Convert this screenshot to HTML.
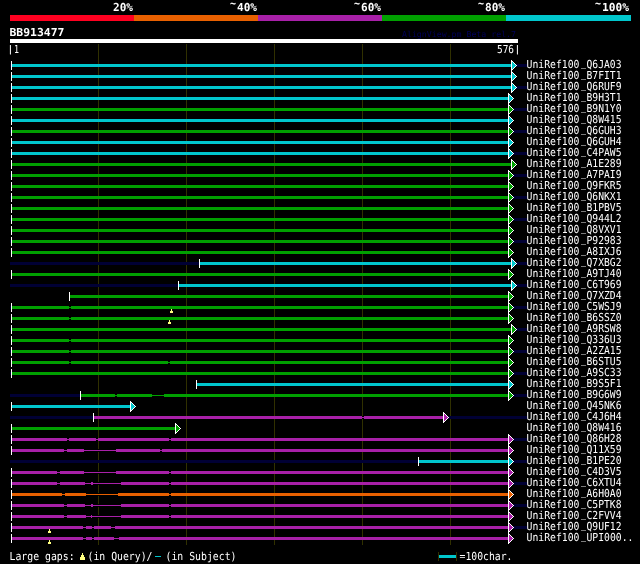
<!DOCTYPE html>
<html><head><meta charset="utf-8"><title>AlignView</title>
<style>
html,body{margin:0;padding:0;background:#000;overflow:hidden;}
svg{display:block;will-change:transform;}
text{font-family:"DejaVu Sans Mono", "Liberation Mono", monospace;white-space:pre;}
</style></head>
<body>
<svg width="640" height="564" viewBox="0 0 640 564" shape-rendering="crispEdges" text-rendering="geometricPrecision">
<rect x="0" y="0" width="640" height="564" fill="#000"/>
<rect x="10" y="15" width="124" height="6" fill="#ff0020"/>
<rect x="134" y="15" width="124" height="6" fill="#e86000"/>
<rect x="258" y="15" width="124" height="6" fill="#a820a8"/>
<rect x="382" y="15" width="124" height="6" fill="#00a000"/>
<rect x="506" y="15" width="125" height="6" fill="#00c6cc"/>
<text x="113" y="11" font-size="11.0" fill="#fff" textLength="20" lengthAdjust="spacingAndGlyphs" font-weight="bold">20%</text>
<text y="11" font-size="11.0" fill="#fff" font-weight="bold"><tspan x="230" dy="-4" textLength="6" lengthAdjust="spacingAndGlyphs">~</tspan><tspan x="237" dy="4" textLength="20" lengthAdjust="spacingAndGlyphs">40%</tspan></text>
<text y="11" font-size="11.0" fill="#fff" font-weight="bold"><tspan x="354" dy="-4" textLength="6" lengthAdjust="spacingAndGlyphs">~</tspan><tspan x="361" dy="4" textLength="20" lengthAdjust="spacingAndGlyphs">60%</tspan></text>
<text y="11" font-size="11.0" fill="#fff" font-weight="bold"><tspan x="478" dy="-4" textLength="6" lengthAdjust="spacingAndGlyphs">~</tspan><tspan x="485" dy="4" textLength="20" lengthAdjust="spacingAndGlyphs">80%</tspan></text>
<text y="11" font-size="11.0" fill="#fff" font-weight="bold"><tspan x="595" dy="-4" textLength="6" lengthAdjust="spacingAndGlyphs">~</tspan><tspan x="602" dy="4" textLength="27" lengthAdjust="spacingAndGlyphs">100%</tspan></text>
<text x="9.5" y="36" font-size="11.0" fill="#fff" textLength="55" lengthAdjust="spacingAndGlyphs" font-weight="bold">BB913477</text>
<text x="402" y="37" font-size="8.2" fill="#00005a" textLength="114" lengthAdjust="spacingAndGlyphs">AlignView.pm Beta rel.7</text>
<rect x="10" y="39" width="508" height="4" fill="#fff"/>
<text y="53" font-size="11.0" fill="#fff"><tspan x="7.79" y="51.9" font-size="9" stroke="#fff" stroke-width="0.3">|</tspan><tspan x="14" y="53" textLength="5" lengthAdjust="spacingAndGlyphs">1</tspan></text>
<text y="53" font-size="11.0" fill="#fff"><tspan x="497" textLength="17" lengthAdjust="spacingAndGlyphs">576</tspan><tspan x="514.79" y="51.9" font-size="9" stroke="#fff" stroke-width="0.3">|</tspan></text>
<rect x="98" y="44" width="1" height="501" fill="#303000"/>
<rect x="186" y="44" width="1" height="501" fill="#303000"/>
<rect x="274" y="44" width="1" height="501" fill="#303000"/>
<rect x="362" y="44" width="1" height="501" fill="#303000"/>
<rect x="450" y="44" width="1" height="501" fill="#303000"/>
<rect x="10" y="64" width="517" height="3" fill="#000034"/>
<rect x="12" y="64" width="499" height="3" fill="#00c6cc"/>
<rect x="11" y="61" width="1" height="9" fill="#fff"/>
<polygon points="511.5,60.5 511.5,70.5 516.5,65.5" fill="#00c6cc" stroke="#fff" stroke-width="1"/>
<text y="68" font-size="11.0" fill="#fff"><tspan x="526.5" textLength="53" lengthAdjust="spacingAndGlyphs">UniRef100</tspan><tspan x="581" dy="-2.5" textLength="5" lengthAdjust="spacingAndGlyphs">_</tspan><tspan x="586.5" dy="2.5" textLength="35" lengthAdjust="spacingAndGlyphs">Q6JA03</tspan></text>
<rect x="12" y="75" width="499" height="3" fill="#00c6cc"/>
<rect x="11" y="72" width="1" height="9" fill="#fff"/>
<polygon points="511.5,71.5 511.5,81.5 516.5,76.5" fill="#00c6cc" stroke="#fff" stroke-width="1"/>
<text y="79" font-size="11.0" fill="#fff"><tspan x="526.5" textLength="53" lengthAdjust="spacingAndGlyphs">UniRef100</tspan><tspan x="581" dy="-2.5" textLength="5" lengthAdjust="spacingAndGlyphs">_</tspan><tspan x="586.5" dy="2.5" textLength="35" lengthAdjust="spacingAndGlyphs">B7FIT1</tspan></text>
<rect x="10" y="86" width="517" height="3" fill="#000034"/>
<rect x="12" y="86" width="499" height="3" fill="#00c6cc"/>
<rect x="11" y="83" width="1" height="9" fill="#fff"/>
<polygon points="511.5,82.5 511.5,92.5 516.5,87.5" fill="#00c6cc" stroke="#fff" stroke-width="1"/>
<text y="90" font-size="11.0" fill="#fff"><tspan x="526.5" textLength="53" lengthAdjust="spacingAndGlyphs">UniRef100</tspan><tspan x="581" dy="-2.5" textLength="5" lengthAdjust="spacingAndGlyphs">_</tspan><tspan x="586.5" dy="2.5" textLength="35" lengthAdjust="spacingAndGlyphs">Q6RUF9</tspan></text>
<rect x="12" y="97" width="496" height="3" fill="#00c6cc"/>
<rect x="11" y="94" width="1" height="9" fill="#fff"/>
<polygon points="508.5,93.5 508.5,103.5 513.5,98.5" fill="#00c6cc" stroke="#fff" stroke-width="1"/>
<text y="101" font-size="11.0" fill="#fff"><tspan x="526.5" textLength="53" lengthAdjust="spacingAndGlyphs">UniRef100</tspan><tspan x="581" dy="-2.5" textLength="5" lengthAdjust="spacingAndGlyphs">_</tspan><tspan x="586.5" dy="2.5" textLength="35" lengthAdjust="spacingAndGlyphs">B9H3T1</tspan></text>
<rect x="10" y="108" width="517" height="3" fill="#000034"/>
<rect x="12" y="108" width="496" height="3" fill="#00a000"/>
<rect x="11" y="105" width="1" height="9" fill="#fff"/>
<polygon points="508.5,104.5 508.5,114.5 513.5,109.5" fill="#00a000" stroke="#fff" stroke-width="1"/>
<text y="112" font-size="11.0" fill="#fff"><tspan x="526.5" textLength="53" lengthAdjust="spacingAndGlyphs">UniRef100</tspan><tspan x="581" dy="-2.5" textLength="5" lengthAdjust="spacingAndGlyphs">_</tspan><tspan x="586.5" dy="2.5" textLength="35" lengthAdjust="spacingAndGlyphs">B9N1Y0</tspan></text>
<rect x="12" y="119" width="496" height="3" fill="#00c6cc"/>
<rect x="11" y="116" width="1" height="9" fill="#fff"/>
<polygon points="508.5,115.5 508.5,125.5 513.5,120.5" fill="#00c6cc" stroke="#fff" stroke-width="1"/>
<text y="123" font-size="11.0" fill="#fff"><tspan x="526.5" textLength="53" lengthAdjust="spacingAndGlyphs">UniRef100</tspan><tspan x="581" dy="-2.5" textLength="5" lengthAdjust="spacingAndGlyphs">_</tspan><tspan x="586.5" dy="2.5" textLength="35" lengthAdjust="spacingAndGlyphs">Q8W415</tspan></text>
<rect x="10" y="130" width="517" height="3" fill="#000034"/>
<rect x="12" y="130" width="496" height="3" fill="#00a000"/>
<rect x="11" y="127" width="1" height="9" fill="#fff"/>
<polygon points="508.5,126.5 508.5,136.5 513.5,131.5" fill="#00a000" stroke="#fff" stroke-width="1"/>
<text y="134" font-size="11.0" fill="#fff"><tspan x="526.5" textLength="53" lengthAdjust="spacingAndGlyphs">UniRef100</tspan><tspan x="581" dy="-2.5" textLength="5" lengthAdjust="spacingAndGlyphs">_</tspan><tspan x="586.5" dy="2.5" textLength="35" lengthAdjust="spacingAndGlyphs">Q6GUH3</tspan></text>
<rect x="12" y="141" width="496" height="3" fill="#00c6cc"/>
<rect x="11" y="138" width="1" height="9" fill="#fff"/>
<polygon points="508.5,137.5 508.5,147.5 513.5,142.5" fill="#00c6cc" stroke="#fff" stroke-width="1"/>
<text y="145" font-size="11.0" fill="#fff"><tspan x="526.5" textLength="53" lengthAdjust="spacingAndGlyphs">UniRef100</tspan><tspan x="581" dy="-2.5" textLength="5" lengthAdjust="spacingAndGlyphs">_</tspan><tspan x="586.5" dy="2.5" textLength="35" lengthAdjust="spacingAndGlyphs">Q6GUH4</tspan></text>
<rect x="10" y="152" width="517" height="3" fill="#000034"/>
<rect x="12" y="152" width="496" height="3" fill="#00c6cc"/>
<rect x="11" y="149" width="1" height="9" fill="#fff"/>
<polygon points="508.5,148.5 508.5,158.5 513.5,153.5" fill="#00c6cc" stroke="#fff" stroke-width="1"/>
<text y="156" font-size="11.0" fill="#fff"><tspan x="526.5" textLength="53" lengthAdjust="spacingAndGlyphs">UniRef100</tspan><tspan x="581" dy="-2.5" textLength="5" lengthAdjust="spacingAndGlyphs">_</tspan><tspan x="586.5" dy="2.5" textLength="35" lengthAdjust="spacingAndGlyphs">C4PAW5</tspan></text>
<rect x="12" y="163" width="499" height="3" fill="#00a000"/>
<rect x="11" y="160" width="1" height="9" fill="#fff"/>
<polygon points="511.5,159.5 511.5,169.5 516.5,164.5" fill="#00a000" stroke="#fff" stroke-width="1"/>
<text y="167" font-size="11.0" fill="#fff"><tspan x="526.5" textLength="53" lengthAdjust="spacingAndGlyphs">UniRef100</tspan><tspan x="581" dy="-2.5" textLength="5" lengthAdjust="spacingAndGlyphs">_</tspan><tspan x="586.5" dy="2.5" textLength="35" lengthAdjust="spacingAndGlyphs">A1E289</tspan></text>
<rect x="10" y="174" width="517" height="3" fill="#000034"/>
<rect x="12" y="174" width="496" height="3" fill="#00a000"/>
<rect x="11" y="171" width="1" height="9" fill="#fff"/>
<polygon points="508.5,170.5 508.5,180.5 513.5,175.5" fill="#00a000" stroke="#fff" stroke-width="1"/>
<text y="178" font-size="11.0" fill="#fff"><tspan x="526.5" textLength="53" lengthAdjust="spacingAndGlyphs">UniRef100</tspan><tspan x="581" dy="-2.5" textLength="5" lengthAdjust="spacingAndGlyphs">_</tspan><tspan x="586.5" dy="2.5" textLength="35" lengthAdjust="spacingAndGlyphs">A7PAI9</tspan></text>
<rect x="12" y="185" width="496" height="3" fill="#00a000"/>
<rect x="11" y="182" width="1" height="9" fill="#fff"/>
<polygon points="508.5,181.5 508.5,191.5 513.5,186.5" fill="#00a000" stroke="#fff" stroke-width="1"/>
<text y="189" font-size="11.0" fill="#fff"><tspan x="526.5" textLength="53" lengthAdjust="spacingAndGlyphs">UniRef100</tspan><tspan x="581" dy="-2.5" textLength="5" lengthAdjust="spacingAndGlyphs">_</tspan><tspan x="586.5" dy="2.5" textLength="35" lengthAdjust="spacingAndGlyphs">Q9FKR5</tspan></text>
<rect x="10" y="196" width="517" height="3" fill="#000034"/>
<rect x="12" y="196" width="496" height="3" fill="#00a000"/>
<rect x="11" y="193" width="1" height="9" fill="#fff"/>
<polygon points="508.5,192.5 508.5,202.5 513.5,197.5" fill="#00a000" stroke="#fff" stroke-width="1"/>
<text y="200" font-size="11.0" fill="#fff"><tspan x="526.5" textLength="53" lengthAdjust="spacingAndGlyphs">UniRef100</tspan><tspan x="581" dy="-2.5" textLength="5" lengthAdjust="spacingAndGlyphs">_</tspan><tspan x="586.5" dy="2.5" textLength="35" lengthAdjust="spacingAndGlyphs">Q6NKX1</tspan></text>
<rect x="12" y="207" width="496" height="3" fill="#00a000"/>
<rect x="11" y="204" width="1" height="9" fill="#fff"/>
<polygon points="508.5,203.5 508.5,213.5 513.5,208.5" fill="#00a000" stroke="#fff" stroke-width="1"/>
<text y="211" font-size="11.0" fill="#fff"><tspan x="526.5" textLength="53" lengthAdjust="spacingAndGlyphs">UniRef100</tspan><tspan x="581" dy="-2.5" textLength="5" lengthAdjust="spacingAndGlyphs">_</tspan><tspan x="586.5" dy="2.5" textLength="35" lengthAdjust="spacingAndGlyphs">B1PBV5</tspan></text>
<rect x="10" y="218" width="517" height="3" fill="#000034"/>
<rect x="12" y="218" width="496" height="3" fill="#00a000"/>
<rect x="11" y="215" width="1" height="9" fill="#fff"/>
<polygon points="508.5,214.5 508.5,224.5 513.5,219.5" fill="#00a000" stroke="#fff" stroke-width="1"/>
<text y="222" font-size="11.0" fill="#fff"><tspan x="526.5" textLength="53" lengthAdjust="spacingAndGlyphs">UniRef100</tspan><tspan x="581" dy="-2.5" textLength="5" lengthAdjust="spacingAndGlyphs">_</tspan><tspan x="586.5" dy="2.5" textLength="35" lengthAdjust="spacingAndGlyphs">Q944L2</tspan></text>
<rect x="12" y="229" width="496" height="3" fill="#00a000"/>
<rect x="11" y="226" width="1" height="9" fill="#fff"/>
<polygon points="508.5,225.5 508.5,235.5 513.5,230.5" fill="#00a000" stroke="#fff" stroke-width="1"/>
<text y="233" font-size="11.0" fill="#fff"><tspan x="526.5" textLength="53" lengthAdjust="spacingAndGlyphs">UniRef100</tspan><tspan x="581" dy="-2.5" textLength="5" lengthAdjust="spacingAndGlyphs">_</tspan><tspan x="586.5" dy="2.5" textLength="35" lengthAdjust="spacingAndGlyphs">Q8VXV1</tspan></text>
<rect x="10" y="240" width="517" height="3" fill="#000034"/>
<rect x="12" y="240" width="496" height="3" fill="#00a000"/>
<rect x="11" y="237" width="1" height="9" fill="#fff"/>
<polygon points="508.5,236.5 508.5,246.5 513.5,241.5" fill="#00a000" stroke="#fff" stroke-width="1"/>
<text y="244" font-size="11.0" fill="#fff"><tspan x="526.5" textLength="53" lengthAdjust="spacingAndGlyphs">UniRef100</tspan><tspan x="581" dy="-2.5" textLength="5" lengthAdjust="spacingAndGlyphs">_</tspan><tspan x="586.5" dy="2.5" textLength="35" lengthAdjust="spacingAndGlyphs">P92983</tspan></text>
<rect x="12" y="251" width="496" height="3" fill="#00a000"/>
<rect x="11" y="248" width="1" height="9" fill="#fff"/>
<polygon points="508.5,247.5 508.5,257.5 513.5,252.5" fill="#00a000" stroke="#fff" stroke-width="1"/>
<text y="255" font-size="11.0" fill="#fff"><tspan x="526.5" textLength="53" lengthAdjust="spacingAndGlyphs">UniRef100</tspan><tspan x="581" dy="-2.5" textLength="5" lengthAdjust="spacingAndGlyphs">_</tspan><tspan x="586.5" dy="2.5" textLength="35" lengthAdjust="spacingAndGlyphs">A8IXJ6</tspan></text>
<rect x="10" y="262" width="517" height="3" fill="#000034"/>
<rect x="200" y="262" width="311" height="3" fill="#00c6cc"/>
<rect x="199" y="259" width="1" height="9" fill="#fff"/>
<polygon points="511.5,258.5 511.5,268.5 516.5,263.5" fill="#00c6cc" stroke="#fff" stroke-width="1"/>
<text y="266" font-size="11.0" fill="#fff"><tspan x="526.5" textLength="53" lengthAdjust="spacingAndGlyphs">UniRef100</tspan><tspan x="581" dy="-2.5" textLength="5" lengthAdjust="spacingAndGlyphs">_</tspan><tspan x="586.5" dy="2.5" textLength="35" lengthAdjust="spacingAndGlyphs">Q7XBG2</tspan></text>
<rect x="12" y="273" width="496" height="3" fill="#00a000"/>
<rect x="11" y="270" width="1" height="9" fill="#fff"/>
<polygon points="508.5,269.5 508.5,279.5 513.5,274.5" fill="#00a000" stroke="#fff" stroke-width="1"/>
<text y="277" font-size="11.0" fill="#fff"><tspan x="526.5" textLength="53" lengthAdjust="spacingAndGlyphs">UniRef100</tspan><tspan x="581" dy="-2.5" textLength="5" lengthAdjust="spacingAndGlyphs">_</tspan><tspan x="586.5" dy="2.5" textLength="35" lengthAdjust="spacingAndGlyphs">A9TJ40</tspan></text>
<rect x="10" y="284" width="517" height="3" fill="#000034"/>
<rect x="179" y="284" width="332" height="3" fill="#00c6cc"/>
<rect x="178" y="281" width="1" height="9" fill="#fff"/>
<polygon points="511.5,280.5 511.5,290.5 516.5,285.5" fill="#00c6cc" stroke="#fff" stroke-width="1"/>
<text y="288" font-size="11.0" fill="#fff"><tspan x="526.5" textLength="53" lengthAdjust="spacingAndGlyphs">UniRef100</tspan><tspan x="581" dy="-2.5" textLength="5" lengthAdjust="spacingAndGlyphs">_</tspan><tspan x="586.5" dy="2.5" textLength="35" lengthAdjust="spacingAndGlyphs">C6T969</tspan></text>
<rect x="70" y="295" width="438" height="3" fill="#00a000"/>
<rect x="69" y="292" width="1" height="9" fill="#fff"/>
<polygon points="508.5,291.5 508.5,301.5 513.5,296.5" fill="#00a000" stroke="#fff" stroke-width="1"/>
<text y="299" font-size="11.0" fill="#fff"><tspan x="526.5" textLength="53" lengthAdjust="spacingAndGlyphs">UniRef100</tspan><tspan x="581" dy="-2.5" textLength="5" lengthAdjust="spacingAndGlyphs">_</tspan><tspan x="586.5" dy="2.5" textLength="35" lengthAdjust="spacingAndGlyphs">Q7XZD4</tspan></text>
<rect x="10" y="306" width="517" height="3" fill="#000034"/>
<rect x="69" y="306" width="2" height="3" fill="#000"/>
<rect x="69" y="307" width="2" height="1" fill="#00a000"/>
<rect x="12" y="306" width="57" height="3" fill="#00a000"/>
<rect x="71" y="306" width="437" height="3" fill="#00a000"/>
<rect x="11" y="303" width="1" height="9" fill="#fff"/>
<polygon points="508.5,302.5 508.5,312.5 513.5,307.5" fill="#00a000" stroke="#fff" stroke-width="1"/>
<rect x="171" y="309" width="1" height="2" fill="#ffff80"/>
<rect x="170" y="311" width="3" height="2" fill="#ffff80"/>
<text y="310" font-size="11.0" fill="#fff"><tspan x="526.5" textLength="53" lengthAdjust="spacingAndGlyphs">UniRef100</tspan><tspan x="581" dy="-2.5" textLength="5" lengthAdjust="spacingAndGlyphs">_</tspan><tspan x="586.5" dy="2.5" textLength="35" lengthAdjust="spacingAndGlyphs">C5WSJ9</tspan></text>
<rect x="69" y="317" width="2" height="3" fill="#000"/>
<rect x="69" y="318" width="2" height="1" fill="#00a000"/>
<rect x="12" y="317" width="57" height="3" fill="#00a000"/>
<rect x="71" y="317" width="437" height="3" fill="#00a000"/>
<rect x="11" y="314" width="1" height="9" fill="#fff"/>
<polygon points="508.5,313.5 508.5,323.5 513.5,318.5" fill="#00a000" stroke="#fff" stroke-width="1"/>
<rect x="169" y="320" width="1" height="2" fill="#ffff80"/>
<rect x="168" y="322" width="3" height="2" fill="#ffff80"/>
<text y="321" font-size="11.0" fill="#fff"><tspan x="526.5" textLength="53" lengthAdjust="spacingAndGlyphs">UniRef100</tspan><tspan x="581" dy="-2.5" textLength="5" lengthAdjust="spacingAndGlyphs">_</tspan><tspan x="586.5" dy="2.5" textLength="35" lengthAdjust="spacingAndGlyphs">B6SSZ0</tspan></text>
<rect x="10" y="328" width="517" height="3" fill="#000034"/>
<rect x="12" y="328" width="499" height="3" fill="#00a000"/>
<rect x="11" y="325" width="1" height="9" fill="#fff"/>
<polygon points="511.5,324.5 511.5,334.5 516.5,329.5" fill="#00a000" stroke="#fff" stroke-width="1"/>
<text y="332" font-size="11.0" fill="#fff"><tspan x="526.5" textLength="53" lengthAdjust="spacingAndGlyphs">UniRef100</tspan><tspan x="581" dy="-2.5" textLength="5" lengthAdjust="spacingAndGlyphs">_</tspan><tspan x="586.5" dy="2.5" textLength="35" lengthAdjust="spacingAndGlyphs">A9RSW8</tspan></text>
<rect x="69" y="339" width="2" height="3" fill="#000"/>
<rect x="69" y="340" width="2" height="1" fill="#00a000"/>
<rect x="12" y="339" width="57" height="3" fill="#00a000"/>
<rect x="71" y="339" width="437" height="3" fill="#00a000"/>
<rect x="11" y="336" width="1" height="9" fill="#fff"/>
<polygon points="508.5,335.5 508.5,345.5 513.5,340.5" fill="#00a000" stroke="#fff" stroke-width="1"/>
<text y="343" font-size="11.0" fill="#fff"><tspan x="526.5" textLength="53" lengthAdjust="spacingAndGlyphs">UniRef100</tspan><tspan x="581" dy="-2.5" textLength="5" lengthAdjust="spacingAndGlyphs">_</tspan><tspan x="586.5" dy="2.5" textLength="35" lengthAdjust="spacingAndGlyphs">Q336U3</tspan></text>
<rect x="10" y="350" width="517" height="3" fill="#000034"/>
<rect x="69" y="350" width="2" height="3" fill="#000"/>
<rect x="69" y="351" width="2" height="1" fill="#00a000"/>
<rect x="12" y="350" width="57" height="3" fill="#00a000"/>
<rect x="71" y="350" width="437" height="3" fill="#00a000"/>
<rect x="11" y="347" width="1" height="9" fill="#fff"/>
<polygon points="508.5,346.5 508.5,356.5 513.5,351.5" fill="#00a000" stroke="#fff" stroke-width="1"/>
<text y="354" font-size="11.0" fill="#fff"><tspan x="526.5" textLength="53" lengthAdjust="spacingAndGlyphs">UniRef100</tspan><tspan x="581" dy="-2.5" textLength="5" lengthAdjust="spacingAndGlyphs">_</tspan><tspan x="586.5" dy="2.5" textLength="35" lengthAdjust="spacingAndGlyphs">A2ZA15</tspan></text>
<rect x="69" y="361" width="2" height="3" fill="#000"/>
<rect x="69" y="362" width="2" height="1" fill="#00a000"/>
<rect x="168" y="361" width="2" height="3" fill="#000"/>
<rect x="168" y="362" width="2" height="1" fill="#00a000"/>
<rect x="12" y="361" width="57" height="3" fill="#00a000"/>
<rect x="71" y="361" width="97" height="3" fill="#00a000"/>
<rect x="170" y="361" width="338" height="3" fill="#00a000"/>
<rect x="11" y="358" width="1" height="9" fill="#fff"/>
<polygon points="508.5,357.5 508.5,367.5 513.5,362.5" fill="#00a000" stroke="#fff" stroke-width="1"/>
<text y="365" font-size="11.0" fill="#fff"><tspan x="526.5" textLength="53" lengthAdjust="spacingAndGlyphs">UniRef100</tspan><tspan x="581" dy="-2.5" textLength="5" lengthAdjust="spacingAndGlyphs">_</tspan><tspan x="586.5" dy="2.5" textLength="35" lengthAdjust="spacingAndGlyphs">B6STU5</tspan></text>
<rect x="10" y="372" width="517" height="3" fill="#000034"/>
<rect x="12" y="372" width="496" height="3" fill="#00a000"/>
<rect x="11" y="369" width="1" height="9" fill="#fff"/>
<polygon points="508.5,368.5 508.5,378.5 513.5,373.5" fill="#00a000" stroke="#fff" stroke-width="1"/>
<text y="376" font-size="11.0" fill="#fff"><tspan x="526.5" textLength="53" lengthAdjust="spacingAndGlyphs">UniRef100</tspan><tspan x="581" dy="-2.5" textLength="5" lengthAdjust="spacingAndGlyphs">_</tspan><tspan x="586.5" dy="2.5" textLength="35" lengthAdjust="spacingAndGlyphs">A9SC33</tspan></text>
<rect x="197" y="383" width="311" height="3" fill="#00c6cc"/>
<rect x="196" y="380" width="1" height="9" fill="#fff"/>
<polygon points="508.5,379.5 508.5,389.5 513.5,384.5" fill="#00c6cc" stroke="#fff" stroke-width="1"/>
<text y="387" font-size="11.0" fill="#fff"><tspan x="526.5" textLength="53" lengthAdjust="spacingAndGlyphs">UniRef100</tspan><tspan x="581" dy="-2.5" textLength="5" lengthAdjust="spacingAndGlyphs">_</tspan><tspan x="586.5" dy="2.5" textLength="35" lengthAdjust="spacingAndGlyphs">B9S5F1</tspan></text>
<rect x="10" y="394" width="517" height="3" fill="#000034"/>
<rect x="115" y="394" width="2" height="3" fill="#000"/>
<rect x="115" y="395" width="2" height="1" fill="#00a000"/>
<rect x="152" y="394" width="12" height="3" fill="#000"/>
<rect x="152" y="395" width="12" height="1" fill="#00a000"/>
<rect x="81" y="394" width="34" height="3" fill="#00a000"/>
<rect x="117" y="394" width="35" height="3" fill="#00a000"/>
<rect x="164" y="394" width="344" height="3" fill="#00a000"/>
<rect x="80" y="391" width="1" height="9" fill="#fff"/>
<polygon points="508.5,390.5 508.5,400.5 513.5,395.5" fill="#00a000" stroke="#fff" stroke-width="1"/>
<text y="398" font-size="11.0" fill="#fff"><tspan x="526.5" textLength="53" lengthAdjust="spacingAndGlyphs">UniRef100</tspan><tspan x="581" dy="-2.5" textLength="5" lengthAdjust="spacingAndGlyphs">_</tspan><tspan x="586.5" dy="2.5" textLength="35" lengthAdjust="spacingAndGlyphs">B9G6W9</tspan></text>
<rect x="12" y="405" width="118" height="3" fill="#00c6cc"/>
<rect x="11" y="402" width="1" height="9" fill="#fff"/>
<polygon points="130.5,401.5 130.5,411.5 135.5,406.5" fill="#00c6cc" stroke="#fff" stroke-width="1"/>
<text y="409" font-size="11.0" fill="#fff"><tspan x="526.5" textLength="53" lengthAdjust="spacingAndGlyphs">UniRef100</tspan><tspan x="581" dy="-2.5" textLength="5" lengthAdjust="spacingAndGlyphs">_</tspan><tspan x="586.5" dy="2.5" textLength="35" lengthAdjust="spacingAndGlyphs">Q45NK6</tspan></text>
<rect x="10" y="416" width="517" height="3" fill="#000034"/>
<rect x="362" y="416" width="2" height="3" fill="#000"/>
<rect x="362" y="417" width="2" height="1" fill="#a820a8"/>
<rect x="94" y="416" width="268" height="3" fill="#a820a8"/>
<rect x="364" y="416" width="79" height="3" fill="#a820a8"/>
<rect x="93" y="413" width="1" height="9" fill="#fff"/>
<polygon points="443.5,412.5 443.5,422.5 448.5,417.5" fill="#a820a8" stroke="#fff" stroke-width="1"/>
<text y="420" font-size="11.0" fill="#fff"><tspan x="526.5" textLength="53" lengthAdjust="spacingAndGlyphs">UniRef100</tspan><tspan x="581" dy="-2.5" textLength="5" lengthAdjust="spacingAndGlyphs">_</tspan><tspan x="586.5" dy="2.5" textLength="35" lengthAdjust="spacingAndGlyphs">C4J6H4</tspan></text>
<rect x="12" y="427" width="163" height="3" fill="#00a000"/>
<rect x="11" y="424" width="1" height="9" fill="#fff"/>
<polygon points="175.5,423.5 175.5,433.5 180.5,428.5" fill="#00a000" stroke="#fff" stroke-width="1"/>
<text y="431" font-size="11.0" fill="#fff"><tspan x="526.5" textLength="53" lengthAdjust="spacingAndGlyphs">UniRef100</tspan><tspan x="581" dy="-2.5" textLength="5" lengthAdjust="spacingAndGlyphs">_</tspan><tspan x="586.5" dy="2.5" textLength="35" lengthAdjust="spacingAndGlyphs">Q8W416</tspan></text>
<rect x="10" y="438" width="517" height="3" fill="#000034"/>
<rect x="67" y="438" width="2" height="3" fill="#000"/>
<rect x="67" y="439" width="2" height="1" fill="#a820a8"/>
<rect x="96" y="438" width="2" height="3" fill="#000"/>
<rect x="96" y="439" width="2" height="1" fill="#a820a8"/>
<rect x="169" y="438" width="2" height="3" fill="#000"/>
<rect x="169" y="439" width="2" height="1" fill="#a820a8"/>
<rect x="12" y="438" width="55" height="3" fill="#a820a8"/>
<rect x="69" y="438" width="27" height="3" fill="#a820a8"/>
<rect x="98" y="438" width="71" height="3" fill="#a820a8"/>
<rect x="171" y="438" width="337" height="3" fill="#a820a8"/>
<rect x="11" y="435" width="1" height="9" fill="#fff"/>
<polygon points="508.5,434.5 508.5,444.5 513.5,439.5" fill="#a820a8" stroke="#fff" stroke-width="1"/>
<text y="442" font-size="11.0" fill="#fff"><tspan x="526.5" textLength="53" lengthAdjust="spacingAndGlyphs">UniRef100</tspan><tspan x="581" dy="-2.5" textLength="5" lengthAdjust="spacingAndGlyphs">_</tspan><tspan x="586.5" dy="2.5" textLength="35" lengthAdjust="spacingAndGlyphs">Q86H28</tspan></text>
<rect x="64" y="449" width="3" height="3" fill="#000"/>
<rect x="64" y="450" width="3" height="1" fill="#a820a8"/>
<rect x="84" y="449" width="32" height="3" fill="#000"/>
<rect x="84" y="450" width="32" height="1" fill="#a820a8"/>
<rect x="160" y="449" width="2" height="3" fill="#000"/>
<rect x="160" y="450" width="2" height="1" fill="#a820a8"/>
<rect x="12" y="449" width="52" height="3" fill="#a820a8"/>
<rect x="67" y="449" width="17" height="3" fill="#a820a8"/>
<rect x="116" y="449" width="44" height="3" fill="#a820a8"/>
<rect x="162" y="449" width="346" height="3" fill="#a820a8"/>
<rect x="11" y="446" width="1" height="9" fill="#fff"/>
<polygon points="508.5,445.5 508.5,455.5 513.5,450.5" fill="#a820a8" stroke="#fff" stroke-width="1"/>
<text y="453" font-size="11.0" fill="#fff"><tspan x="526.5" textLength="53" lengthAdjust="spacingAndGlyphs">UniRef100</tspan><tspan x="581" dy="-2.5" textLength="5" lengthAdjust="spacingAndGlyphs">_</tspan><tspan x="586.5" dy="2.5" textLength="35" lengthAdjust="spacingAndGlyphs">Q11X59</tspan></text>
<rect x="10" y="460" width="517" height="3" fill="#000034"/>
<rect x="419" y="460" width="89" height="3" fill="#00c6cc"/>
<rect x="418" y="457" width="1" height="9" fill="#fff"/>
<polygon points="508.5,456.5 508.5,466.5 513.5,461.5" fill="#00c6cc" stroke="#fff" stroke-width="1"/>
<text y="464" font-size="11.0" fill="#fff"><tspan x="526.5" textLength="53" lengthAdjust="spacingAndGlyphs">UniRef100</tspan><tspan x="581" dy="-2.5" textLength="5" lengthAdjust="spacingAndGlyphs">_</tspan><tspan x="586.5" dy="2.5" textLength="35" lengthAdjust="spacingAndGlyphs">B1PE20</tspan></text>
<rect x="57" y="471" width="3" height="3" fill="#000"/>
<rect x="57" y="472" width="3" height="1" fill="#a820a8"/>
<rect x="84" y="471" width="32" height="3" fill="#000"/>
<rect x="84" y="472" width="32" height="1" fill="#a820a8"/>
<rect x="169" y="471" width="2" height="3" fill="#000"/>
<rect x="169" y="472" width="2" height="1" fill="#a820a8"/>
<rect x="12" y="471" width="45" height="3" fill="#a820a8"/>
<rect x="60" y="471" width="24" height="3" fill="#a820a8"/>
<rect x="116" y="471" width="53" height="3" fill="#a820a8"/>
<rect x="171" y="471" width="337" height="3" fill="#a820a8"/>
<rect x="11" y="468" width="1" height="9" fill="#fff"/>
<polygon points="508.5,467.5 508.5,477.5 513.5,472.5" fill="#a820a8" stroke="#fff" stroke-width="1"/>
<text y="475" font-size="11.0" fill="#fff"><tspan x="526.5" textLength="53" lengthAdjust="spacingAndGlyphs">UniRef100</tspan><tspan x="581" dy="-2.5" textLength="5" lengthAdjust="spacingAndGlyphs">_</tspan><tspan x="586.5" dy="2.5" textLength="35" lengthAdjust="spacingAndGlyphs">C4D3V5</tspan></text>
<rect x="10" y="482" width="517" height="3" fill="#000034"/>
<rect x="57" y="482" width="3" height="3" fill="#000"/>
<rect x="57" y="483" width="3" height="1" fill="#a820a8"/>
<rect x="85" y="482" width="6" height="3" fill="#000"/>
<rect x="85" y="483" width="6" height="1" fill="#a820a8"/>
<rect x="93" y="482" width="28" height="3" fill="#000"/>
<rect x="93" y="483" width="28" height="1" fill="#a820a8"/>
<rect x="169" y="482" width="2" height="3" fill="#000"/>
<rect x="169" y="483" width="2" height="1" fill="#a820a8"/>
<rect x="12" y="482" width="45" height="3" fill="#a820a8"/>
<rect x="60" y="482" width="25" height="3" fill="#a820a8"/>
<rect x="91" y="482" width="2" height="3" fill="#a820a8"/>
<rect x="121" y="482" width="48" height="3" fill="#a820a8"/>
<rect x="171" y="482" width="337" height="3" fill="#a820a8"/>
<rect x="11" y="479" width="1" height="9" fill="#fff"/>
<polygon points="508.5,478.5 508.5,488.5 513.5,483.5" fill="#a820a8" stroke="#fff" stroke-width="1"/>
<text y="486" font-size="11.0" fill="#fff"><tspan x="526.5" textLength="53" lengthAdjust="spacingAndGlyphs">UniRef100</tspan><tspan x="581" dy="-2.5" textLength="5" lengthAdjust="spacingAndGlyphs">_</tspan><tspan x="586.5" dy="2.5" textLength="35" lengthAdjust="spacingAndGlyphs">C6XTU4</tspan></text>
<rect x="62" y="493" width="3" height="3" fill="#000"/>
<rect x="62" y="494" width="3" height="1" fill="#e86000"/>
<rect x="86" y="493" width="32" height="3" fill="#000"/>
<rect x="86" y="494" width="32" height="1" fill="#e86000"/>
<rect x="169" y="493" width="2" height="3" fill="#000"/>
<rect x="169" y="494" width="2" height="1" fill="#e86000"/>
<rect x="12" y="493" width="50" height="3" fill="#e86000"/>
<rect x="65" y="493" width="21" height="3" fill="#e86000"/>
<rect x="118" y="493" width="51" height="3" fill="#e86000"/>
<rect x="171" y="493" width="337" height="3" fill="#e86000"/>
<rect x="11" y="490" width="1" height="9" fill="#fff"/>
<polygon points="508.5,489.5 508.5,499.5 513.5,494.5" fill="#e86000" stroke="#fff" stroke-width="1"/>
<text y="497" font-size="11.0" fill="#fff"><tspan x="526.5" textLength="53" lengthAdjust="spacingAndGlyphs">UniRef100</tspan><tspan x="581" dy="-2.5" textLength="5" lengthAdjust="spacingAndGlyphs">_</tspan><tspan x="586.5" dy="2.5" textLength="35" lengthAdjust="spacingAndGlyphs">A6H0A0</tspan></text>
<rect x="10" y="504" width="517" height="3" fill="#000034"/>
<rect x="64" y="504" width="3" height="3" fill="#000"/>
<rect x="64" y="505" width="3" height="1" fill="#a820a8"/>
<rect x="85" y="504" width="6" height="3" fill="#000"/>
<rect x="85" y="505" width="6" height="1" fill="#a820a8"/>
<rect x="93" y="504" width="28" height="3" fill="#000"/>
<rect x="93" y="505" width="28" height="1" fill="#a820a8"/>
<rect x="169" y="504" width="2" height="3" fill="#000"/>
<rect x="169" y="505" width="2" height="1" fill="#a820a8"/>
<rect x="12" y="504" width="52" height="3" fill="#a820a8"/>
<rect x="67" y="504" width="18" height="3" fill="#a820a8"/>
<rect x="91" y="504" width="2" height="3" fill="#a820a8"/>
<rect x="121" y="504" width="48" height="3" fill="#a820a8"/>
<rect x="171" y="504" width="337" height="3" fill="#a820a8"/>
<rect x="11" y="501" width="1" height="9" fill="#fff"/>
<polygon points="508.5,500.5 508.5,510.5 513.5,505.5" fill="#a820a8" stroke="#fff" stroke-width="1"/>
<text y="508" font-size="11.0" fill="#fff"><tspan x="526.5" textLength="53" lengthAdjust="spacingAndGlyphs">UniRef100</tspan><tspan x="581" dy="-2.5" textLength="5" lengthAdjust="spacingAndGlyphs">_</tspan><tspan x="586.5" dy="2.5" textLength="35" lengthAdjust="spacingAndGlyphs">C5PTK8</tspan></text>
<rect x="64" y="515" width="3" height="3" fill="#000"/>
<rect x="64" y="516" width="3" height="1" fill="#a820a8"/>
<rect x="86" y="515" width="5" height="3" fill="#000"/>
<rect x="86" y="516" width="5" height="1" fill="#a820a8"/>
<rect x="92" y="515" width="29" height="3" fill="#000"/>
<rect x="92" y="516" width="29" height="1" fill="#a820a8"/>
<rect x="169" y="515" width="2" height="3" fill="#000"/>
<rect x="169" y="516" width="2" height="1" fill="#a820a8"/>
<rect x="12" y="515" width="52" height="3" fill="#a820a8"/>
<rect x="67" y="515" width="19" height="3" fill="#a820a8"/>
<rect x="91" y="515" width="1" height="3" fill="#a820a8"/>
<rect x="121" y="515" width="48" height="3" fill="#a820a8"/>
<rect x="171" y="515" width="337" height="3" fill="#a820a8"/>
<rect x="11" y="512" width="1" height="9" fill="#fff"/>
<polygon points="508.5,511.5 508.5,521.5 513.5,516.5" fill="#a820a8" stroke="#fff" stroke-width="1"/>
<text y="519" font-size="11.0" fill="#fff"><tspan x="526.5" textLength="53" lengthAdjust="spacingAndGlyphs">UniRef100</tspan><tspan x="581" dy="-2.5" textLength="5" lengthAdjust="spacingAndGlyphs">_</tspan><tspan x="586.5" dy="2.5" textLength="35" lengthAdjust="spacingAndGlyphs">C2FVV4</tspan></text>
<rect x="10" y="526" width="517" height="3" fill="#000034"/>
<rect x="83" y="526" width="3" height="3" fill="#000"/>
<rect x="83" y="527" width="3" height="1" fill="#a820a8"/>
<rect x="92" y="526" width="2" height="3" fill="#000"/>
<rect x="92" y="527" width="2" height="1" fill="#a820a8"/>
<rect x="111" y="526" width="4" height="3" fill="#000"/>
<rect x="111" y="527" width="4" height="1" fill="#a820a8"/>
<rect x="12" y="526" width="71" height="3" fill="#a820a8"/>
<rect x="86" y="526" width="6" height="3" fill="#a820a8"/>
<rect x="94" y="526" width="17" height="3" fill="#a820a8"/>
<rect x="115" y="526" width="393" height="3" fill="#a820a8"/>
<rect x="11" y="523" width="1" height="9" fill="#fff"/>
<polygon points="508.5,522.5 508.5,532.5 513.5,527.5" fill="#a820a8" stroke="#fff" stroke-width="1"/>
<rect x="49" y="529" width="1" height="2" fill="#ffff80"/>
<rect x="48" y="531" width="3" height="2" fill="#ffff80"/>
<text y="530" font-size="11.0" fill="#fff"><tspan x="526.5" textLength="53" lengthAdjust="spacingAndGlyphs">UniRef100</tspan><tspan x="581" dy="-2.5" textLength="5" lengthAdjust="spacingAndGlyphs">_</tspan><tspan x="586.5" dy="2.5" textLength="35" lengthAdjust="spacingAndGlyphs">Q9UF12</tspan></text>
<rect x="83" y="537" width="3" height="3" fill="#000"/>
<rect x="83" y="538" width="3" height="1" fill="#a820a8"/>
<rect x="92" y="537" width="2" height="3" fill="#000"/>
<rect x="92" y="538" width="2" height="1" fill="#a820a8"/>
<rect x="114" y="537" width="5" height="3" fill="#000"/>
<rect x="114" y="538" width="5" height="1" fill="#a820a8"/>
<rect x="12" y="537" width="71" height="3" fill="#a820a8"/>
<rect x="86" y="537" width="6" height="3" fill="#a820a8"/>
<rect x="94" y="537" width="20" height="3" fill="#a820a8"/>
<rect x="119" y="537" width="389" height="3" fill="#a820a8"/>
<rect x="11" y="534" width="1" height="9" fill="#fff"/>
<polygon points="508.5,533.5 508.5,543.5 513.5,538.5" fill="#a820a8" stroke="#fff" stroke-width="1"/>
<rect x="49" y="540" width="1" height="2" fill="#ffff80"/>
<rect x="48" y="542" width="3" height="2" fill="#ffff80"/>
<text y="541" font-size="11.0" fill="#fff"><tspan x="526.5" textLength="53" lengthAdjust="spacingAndGlyphs">UniRef100</tspan><tspan x="581" dy="-2.5" textLength="5" lengthAdjust="spacingAndGlyphs">_</tspan><tspan x="586.5" dy="2.5" textLength="47" lengthAdjust="spacingAndGlyphs">UPI000..</tspan></text>
<text x="9.5" y="560" font-size="11.0" fill="#fff" textLength="71" lengthAdjust="spacingAndGlyphs">Large gaps: </text>
<rect x="82" y="553" width="1" height="2" fill="#ffff80"/>
<rect x="81" y="555" width="3" height="2" fill="#ffff80"/>
<rect x="80" y="557" width="5" height="3" fill="#ffff80"/>
<text x="87.5" y="560" font-size="11.0" fill="#fff" textLength="65" lengthAdjust="spacingAndGlyphs">(in Query)/</text>
<rect x="155" y="556" width="6" height="1" fill="#00c6cc"/>
<text x="165.5" y="560" font-size="11.0" fill="#fff" textLength="71" lengthAdjust="spacingAndGlyphs">(in Subject)</text>
<rect x="438" y="552" width="1" height="9" fill="#303000"/>
<rect x="456" y="552" width="1" height="9" fill="#303000"/>
<rect x="439" y="555" width="17" height="3" fill="#00c6cc"/>
<text x="459.5" y="560" font-size="11.0" fill="#fff" textLength="53" lengthAdjust="spacingAndGlyphs">=100char.</text>
</svg>
</body></html>
